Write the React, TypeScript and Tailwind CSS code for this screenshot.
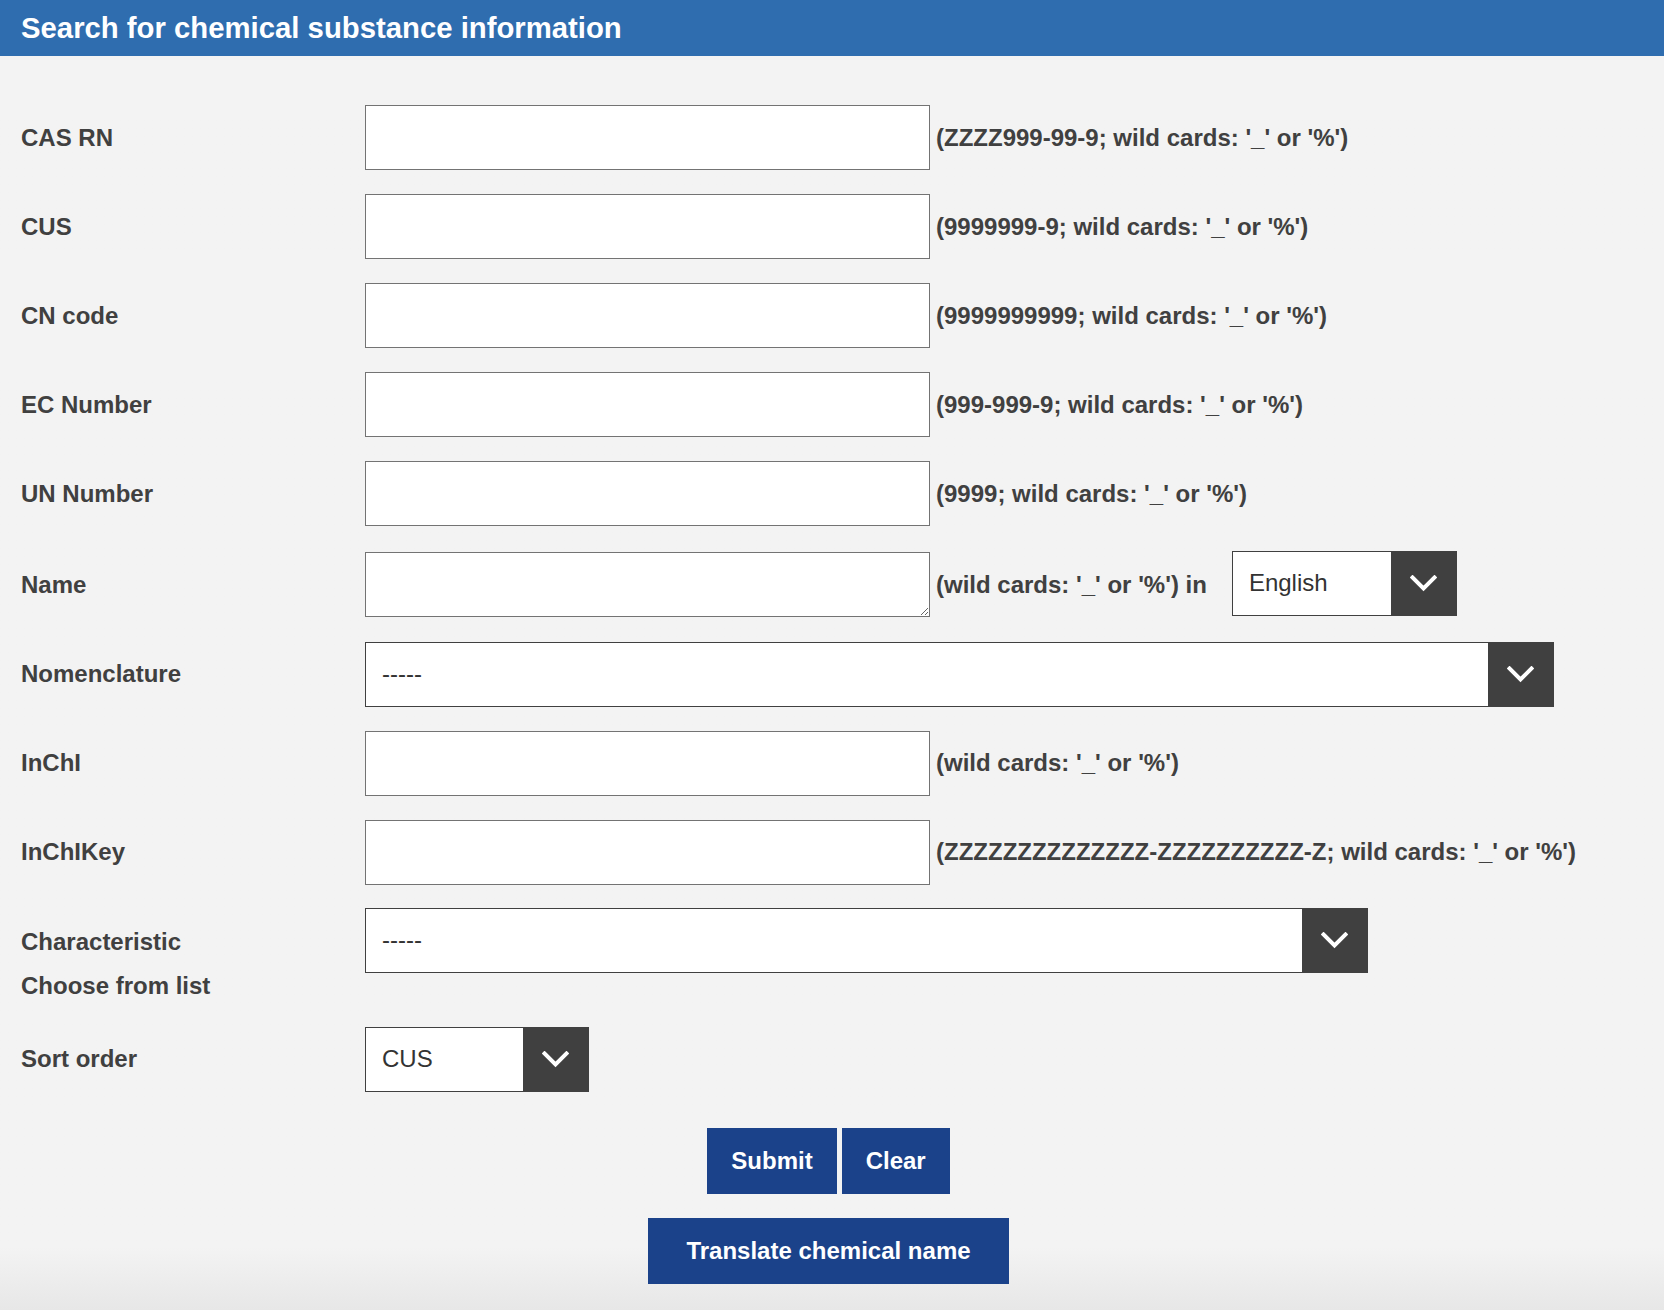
import React from "react";

// --- Filas de texto del formulario ---
const TEXT_ROWS = [
  { label: "CAS RN", hint: "(ZZZZ999-99-9; wild cards: '_' or '%')" },
  { label: "CUS", hint: "(9999999-9; wild cards: '_' or '%')" },
  { label: "CN code", hint: "(9999999999; wild cards: '_' or '%')" },
  { label: "EC Number", hint: "(999-999-9; wild cards: '_' or '%')" },
  { label: "UN Number", hint: "(9999; wild cards: '_' or '%')" },
];

const Chevron = () => (
  <svg width="27" height="17" viewBox="0 0 27 17" fill="none">
    <polyline points="2.5,2.5 13.5,13.5 24.5,2.5" stroke="white" strokeWidth="4" strokeLinecap="square" />
  </svg>
);

type SelectProps = {
  value: string;
  widthClass: string;
};

const FakeSelect = ({ value, widthClass }: SelectProps) => (
  <div className={`flex h-[65px] shrink-0 border border-[#404040] bg-white ${widthClass}`}>
    <div className="flex flex-1 items-center pl-[16px] text-[24px] font-normal text-[#333333]">{value}</div>
    <div className="flex w-[65px] items-center justify-center bg-[#404040]">
      <Chevron />
    </div>
  </div>
);

const Label = ({ children }: { children: React.ReactNode }) => (
  <div className="w-[344px] shrink-0 text-[24px] font-bold text-[#404040]">{children}</div>
);

const Hint = ({ children }: { children: React.ReactNode }) => (
  <div className="ml-[6px] whitespace-nowrap text-[24px] font-bold text-[#404040]">{children}</div>
);

const TextBox = () => (
  <input type="text" className="h-[65px] w-[565px] shrink-0 border border-[#737373] bg-white outline-none" />
);

export default function App() {
  return (
    <div className="flex min-h-screen flex-col font-['Liberation_Sans',Arial,sans-serif]">
      <div className="flex h-[56px] items-center bg-[#2f6daf] px-[21px]">
        <h1 className="text-[29.3px] font-bold text-white">Search for chemical substance information</h1>
      </div>

      <div className="flex flex-1 flex-col bg-linear-to-b from-[#f3f3f3] from-95% to-[#e7e7e7] pb-[24px] pl-[21px] pt-[49px]">
        <div className="flex flex-col gap-[24.1px]">
          {TEXT_ROWS.map((row) => (
            <div key={row.label} className="flex h-[65px] items-center">
              <Label>{row.label}</Label>
              <TextBox />
              <Hint>{row.hint}</Hint>
            </div>
          ))}

          <div className="mt-[2px] flex h-[65px] items-center">
            <Label>Name</Label>
            <textarea className="h-[65px] w-[565px] shrink-0 border border-[#737373] bg-white outline-none" />
            <Hint>(wild cards: '_' or '%') in</Hint>
            <div className="ml-[25px] -mt-[3px]">
              <FakeSelect value="English" widthClass="w-[225px]" />
            </div>
          </div>

          <div className="flex h-[65px] items-center">
            <Label>Nomenclature</Label>
            <FakeSelect value="-----" widthClass="w-[1189px]" />
          </div>

          <div className="flex h-[65px] items-center">
            <Label>InChI</Label>
            <TextBox />
            <Hint>(wild cards: '_' or '%')</Hint>
          </div>

          <div className="flex h-[65px] items-center">
            <Label>InChIKey</Label>
            <TextBox />
            <Hint>(ZZZZZZZZZZZZZZ-ZZZZZZZZZZ-Z; wild cards: '_' or '%')</Hint>
          </div>

          <div className="-mt-[1px] flex h-[95px] items-start">
            <div className="w-[344px] shrink-0 pt-[12px] text-[24px] font-bold leading-[44.5px] text-[#404040]">
              <div>Characteristic</div>
              <div>Choose from list</div>
            </div>
            <FakeSelect value="-----" widthClass="w-[1003px]" />
          </div>

          <div className="flex h-[65px] items-center">
            <Label>Sort order</Label>
            <FakeSelect value="CUS" widthClass="w-[224px]" />
          </div>
        </div>

        <div className="mt-[36px] flex flex-col items-center gap-[24px] pr-[28px]">
          <div className="flex gap-[5px]">
            <button className="h-[66px] bg-[#1b428a] px-[24px] text-[24px] font-bold text-white">Submit</button>
            <button className="h-[66px] bg-[#1b428a] px-[24px] text-[24px] font-bold text-white">Clear</button>
          </div>
          <button className="h-[66px] bg-[#1b428a] px-[38px] text-[24px] font-bold text-white">
            Translate chemical name
          </button>
        </div>
      </div>
    </div>
  );
}
